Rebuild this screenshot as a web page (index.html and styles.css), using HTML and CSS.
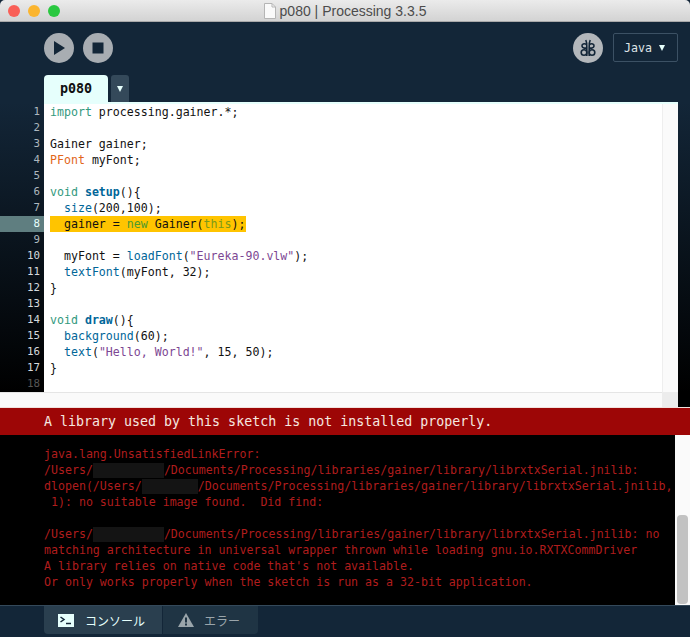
FILE: index.html
```html
<!DOCTYPE html>
<html lang="en">
  <head>
    <meta charset="UTF-8" />
    <title>p080 | Processing 3.3.5</title>
    <link rel="stylesheet" href="styles.css">
  </head>
  <body>
    <div class="window">
      <!-- title bar -->
      <div class="titlebar">
        <div class="lights">
          <span class="light red"></span>
          <span class="light yellow"></span>
          <span class="light green"></span>
        </div>
        <svg class="doc-icon" width="12" height="16" viewBox="0 0 12 16">
          <path d="M.5.5H8L11.5 4V15.5H.5Z" fill="#fafafa" stroke="#b5b5b5"/>
          <path d="M8 .5V4H11.5" fill="none" stroke="#b5b5b5"/>
        </svg>
        <span class="title">p080 | Processing 3.3.5</span>
      </div>

      <!-- toolbar -->
      <div class="toolbar">
        <button class="round-btn">
          <svg width="16" height="16" viewBox="0 0 16 16"><path d="M3 1L14 8L3 15Z" fill="#132638"/></svg>
        </button>
        <button class="round-btn">
          <svg width="12" height="12" viewBox="0 0 12 12"><rect width="11" height="11" x=".5" y=".5" fill="#132638"/></svg>
        </button>
        <div class="spacer"></div>
        <button class="round-btn debug">
          <svg width="22" height="22" viewBox="0 0 22 22" fill="none" stroke="#132638" stroke-width="1.6">
            <path d="M8.8 3C9.8 5 9.8 7 9.8 10V19"/>
            <path d="M13.2 3C12.2 5 12.2 7 12.2 10V19"/>
            <path d="M9.8 7.5C7 6 4.6 7.2 5 9.2C5.3 11 8 11.4 9.8 11"/>
            <path d="M12.2 7.5C15 6 17.4 7.2 17 9.2C16.7 11 14 11.4 12.2 11"/>
            <circle cx="7" cy="15.5" r="2.8"/>
            <circle cx="15" cy="15.5" r="2.8"/>
          </svg>
        </button>
        <div class="mode-btn">Java<span class="caret"></span></div>
      </div>

      <!-- tabs -->
      <div class="tabs">
        <div class="tab">p080</div>
        <div class="tab-menu"><span class="caret"></span></div>
      </div>

      <!-- editor -->
      <div class="editor-row">
        <div class="gutter">
          <div class="num n-a">1</div>
          <div class="num n-a">2</div>
          <div class="num n-a">3</div>
          <div class="num n-a">4</div>
          <div class="num n-a">5</div>
          <div class="num n-a">6</div>
          <div class="num n-a">7</div>
          <div class="num current">8</div>
          <div class="num n-a">9</div>
          <div class="num">10</div>
          <div class="num">11</div>
          <div class="num">12</div>
          <div class="num">13</div>
          <div class="num">14</div>
          <div class="num">15</div>
          <div class="num">16</div>
          <div class="num">17</div>
          <div class="num last">18</div>
        </div>
        <div class="editor">
          <pre class="code"><span class="kw1">import</span> processing.gainer.*;

Gainer gainer;
<span class="kw2">PFont</span> myFont;

<span class="kw1">void</span> <span class="fn-b">setup</span>(){
  <span class="fn">size</span>(200,100);
<span class="hl">  gainer = <span class="hl-new">new</span> Gainer(<span class="hl-this">this</span>);</span>

  myFont = <span class="fn">loadFont</span>(<span class="str">"Eureka-90.vlw"</span>);
  <span class="fn">textFont</span>(myFont, 32);
}

<span class="kw1">void</span> <span class="fn-b">draw</span>(){
  <span class="fn">background</span>(60);
  <span class="fn">text</span>(<span class="str">"Hello, World!"</span>, 15, 50);
}
</pre>
          <div class="vscroll"></div>
        </div>
        <div class="edge"></div>
      </div>
      <div class="hscroll-row">
        <div class="hscroll"></div>
        <div class="corner"></div>
        <div class="edge-low"></div>
      </div>

      <!-- status -->
      <div class="status">A library used by this sketch is not installed properly.</div>

      <!-- console -->
      <div class="console-row">
        <pre class="console">java.lang.UnsatisfiedLinkError:
/Users/<span class="mask w1"></span>/Documents/Processing/libraries/gainer/library/librxtxSerial.jnilib:
dlopen(/Users/<span class="mask w2"></span>/Documents/Processing/libraries/gainer/library/librxtxSerial.jnilib,
 1): no suitable image found.  Did find:

/Users/<span class="mask w1"></span>/Documents/Processing/libraries/gainer/library/librxtxSerial.jnilib: no
matching architecture in universal wrapper thrown while loading gnu.io.RXTXCommDriver
A library relies on native code that's not available.
Or only works properly when the sketch is run as a 32-bit application.</pre>
        <div class="console-track"><div class="console-thumb"></div></div>
      </div>

      <!-- footer -->
      <div class="footer">
        <div class="foot-tabs">
          <div class="foot-tab active">
            <svg width="16" height="13" viewBox="0 0 16 13">
              <rect width="16" height="13" fill="#e6fffc"/>
              <path d="M2.5 3L6 5.5L2.5 8" fill="none" stroke="#132638" stroke-width="1.5"/>
              <path d="M8 9.5H13" stroke="#132638" stroke-width="1.5"/>
            </svg>
            <span>コンソール</span>
          </div>
          <div class="foot-tab">
            <svg width="16" height="14" viewBox="0 0 16 14">
              <path d="M8 0L16 14H0Z" fill="#9aa5ab"/>
              <path d="M8 4.5V9.5M8 10.5V12.5" stroke="#1f3444" stroke-width="2"/>
            </svg>
            <span>エラー</span>
          </div>
        </div>
      </div>
    </div>
  </body>
</html>
```

FILE: styles.css
```css
* {
  padding: 0;
  margin: 0;
  box-sizing: border-box;
}

body {
  background-color: #132638;
  overflow: hidden;
}

.window {
  --mono: "DejaVu Sans Mono", "Liberation Mono", monospace;
  width: 690px;
  height: 637px;
  display: flex;
  flex-direction: column;
}

/* title bar */
.titlebar {
  height: 22px;
  display: flex;
  align-items: center;
  justify-content: center;
  gap: 4px;
  position: relative;
  background: linear-gradient(#ebebeb, #d3d3d3);
  border-bottom: 1px solid #a9a9a9;
  border-radius: 5px 5px 0 0;
}

.lights {
  position: absolute;
  left: 8px;
  top: 5px;
  display: flex;
  gap: 8px;
}

.light {
  width: 12px;
  height: 12px;
  border-radius: 100%;
}
.red { background-color: #f95f57; }
.yellow { background-color: #fbb52f; }
.green { background-color: #2ac840; }

.title {
  font: 14px "Liberation Sans", sans-serif;
  color: #4c4c4c;
}

/* toolbar */
.toolbar {
  height: 53px;
  padding: 11px 12px 0 44px;
  display: flex;
  align-items: flex-start;
  gap: 9px;
}

.round-btn {
  width: 30px;
  height: 30px;
  border: 0;
  border-radius: 100%;
  background-color: #a8adb2;
  display: flex;
  align-items: center;
  justify-content: center;
}

.debug {
  background-color: #b3b7bb;
}

.spacer {
  flex: 1;
}

.mode-btn {
  width: 65px;
  height: 29px;
  margin-left: 1px;
  padding-left: 10px;
  border: 1px solid #3c5164;
  border-radius: 2px;
  color: #dfe4e7;
  font: 11.6px/28px var(--mono);
}

.caret {
  display: inline-block;
  width: 0;
  height: 0;
  border-left: 3px solid transparent;
  border-right: 3px solid transparent;
  border-top: 6px solid #e6fffc;
}

.mode-btn .caret {
  margin-left: 7px;
  vertical-align: 1px;
}

/* tabs */
.tabs {
  height: 27px;
  padding-left: 44px;
  display: flex;
  gap: 3px;
}

.tab {
  width: 64px;
  background-color: #e6fffc;
  border-radius: 4px 4px 0 0;
  color: #111;
  font: bold 13.4px/28px var(--mono);
  text-align: center;
}

.tab-menu {
  width: 18px;
  background-color: #34495a;
  border-radius: 3px 3px 0 0;
  display: flex;
  align-items: center;
  justify-content: center;
}

/* editor */
.editor-row {
  height: 290px;
  display: flex;
}

.gutter {
  width: 44px;
  padding-top: 2px;
  background: linear-gradient(#132638, #000);
}

.num {
  height: 16px;
  padding-right: 4px;
  text-align: right;
  color: #d5dadd;
  font: 10.8px/16px var(--mono);
}
.n-a { color: #aeb8bf; }
.current {
  background-color: #5f7e80;
  color: #e6fffc;
}
.last { color: #555; }

.editor {
  flex: 1;
  display: flex;
  background-color: #fff;
  border-top: 2px solid #e6fffc;
}

.code {
  flex: 1;
  padding-left: 6px;
  color: #111;
  font: 11.6px/16px var(--mono);
}

.kw1 { color: #33997e; }
.kw2 { color: #e2661a; }
.fn { color: #006699; }
.fn-b { color: #006699; font-weight: bold; }
.str { color: #7d4793; }
.hl {
  display: inline-block;
  width: 196px;
  background-color: #ffc400;
}
.hl-new { color: #4d9a2f; }
.hl-this { color: #7a9a1a; }

.vscroll {
  width: 16px;
  background-color: #fafafa;
  border-left: 1px solid #eee;
}

.edge {
  width: 12px;
  background: linear-gradient(#132638, #000);
}

.hscroll-row {
  height: 15px;
  display: flex;
}

.hscroll {
  flex: 1;
  background-color: #fafafa;
  border-top: 1px solid #e5e5e5;
}

.corner {
  width: 16px;
  background-color: #ececec;
}

.edge-low {
  width: 12px;
  background-color: #000;
}

/* status */
.status {
  height: 28px;
  padding-left: 44px;
  background-color: #9d0606;
  border-top: 1px solid #f1e2de;
  color: #f6e8e0;
  font: 13.3px/28px var(--mono);
}

/* console */
.console-row {
  height: 170px;
  display: flex;
}

.console {
  flex: 1;
  padding: 11px 0 0 44px;
  background-color: #000;
  color: #b01d1d;
  font: 11.6px/16px var(--mono);
  overflow: hidden;
}

.mask {
  display: inline-block;
  height: 15px;
  vertical-align: -4px;
  background-color: #141414;
}
.w1 { width: 71px; }
.w2 { width: 56px; }

.console-track {
  width: 15px;
  padding: 80px 2px 1px;
  background-color: #fafafa;
}

.console-thumb {
  height: 89px;
  border-radius: 4px;
  background-color: #c2c2c2;
}

/* footer */
.footer {
  flex: 1;
  padding-left: 44px;
  border-top: 1px solid #34495a;
}

.foot-tabs {
  display: flex;
  gap: 1px;
  width: 214px;
  height: 28px;
}

.foot-tab {
  flex: 1;
  display: flex;
  align-items: center;
  gap: 10px;
  padding-left: 15px;
  background-color: #1f3444;
  border-radius: 0 0 4px 0;
  color: #9aa5ab;
  font: 12px "Noto Sans CJK JP", sans-serif;
}

.foot-tab.active {
  flex: 0 0 118px;
  padding-left: 14px;
  gap: 11px;
  border-radius: 0 0 0 4px;
  background-color: #2a3f4f;
  color: #e6fffc;
}
```
